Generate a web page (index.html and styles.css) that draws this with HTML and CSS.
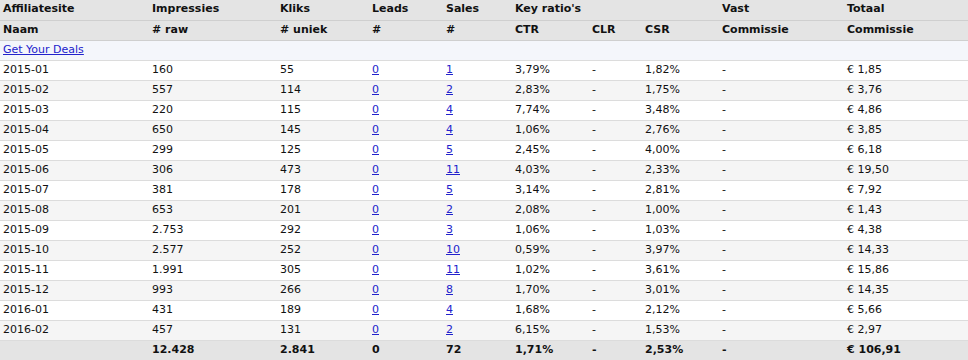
FILE: index.html
```html
<!DOCTYPE html>
<html>
<head>
<meta charset="utf-8">
<link rel="stylesheet" href="styles.css">
</head>
<body>
<table class="stats">
<colgroup>
<col class="c1"><col class="c2"><col class="c3"><col class="c4"><col class="c5"><col class="c6"><col class="c7"><col class="c8"><col class="c9"><col class="c10">
</colgroup>
<thead>
<tr class="head"><th>Affiliatesite</th><th>Impressies</th><th>Kliks</th><th>Leads</th><th>Sales</th><th colspan="3">Key ratio's</th><th>Vast</th><th>Totaal</th></tr>
<tr class="head"><th>Naam</th><th># raw</th><th># uniek</th><th>#</th><th>#</th><th>CTR</th><th>CLR</th><th>CSR</th><th>Commissie</th><th>Commissie</th></tr>
</thead>
<tbody>
<tr class="site"><td colspan="10"><a href="#">Get Your Deals</a></td></tr>
<tr><td>2015-01</td><td>160</td><td>55</td><td><a href="#">0</a></td><td><a href="#">1</a></td><td>3,79%</td><td>-</td><td>1,82%</td><td>-</td><td>€ 1,85</td></tr>
<tr class="alt"><td>2015-02</td><td>557</td><td>114</td><td><a href="#">0</a></td><td><a href="#">2</a></td><td>2,83%</td><td>-</td><td>1,75%</td><td>-</td><td>€ 3,76</td></tr>
<tr><td>2015-03</td><td>220</td><td>115</td><td><a href="#">0</a></td><td><a href="#">4</a></td><td>7,74%</td><td>-</td><td>3,48%</td><td>-</td><td>€ 4,86</td></tr>
<tr class="alt"><td>2015-04</td><td>650</td><td>145</td><td><a href="#">0</a></td><td><a href="#">4</a></td><td>1,06%</td><td>-</td><td>2,76%</td><td>-</td><td>€ 3,85</td></tr>
<tr><td>2015-05</td><td>299</td><td>125</td><td><a href="#">0</a></td><td><a href="#">5</a></td><td>2,45%</td><td>-</td><td>4,00%</td><td>-</td><td>€ 6,18</td></tr>
<tr class="alt"><td>2015-06</td><td>306</td><td>473</td><td><a href="#">0</a></td><td><a href="#">11</a></td><td>4,03%</td><td>-</td><td>2,33%</td><td>-</td><td>€ 19,50</td></tr>
<tr><td>2015-07</td><td>381</td><td>178</td><td><a href="#">0</a></td><td><a href="#">5</a></td><td>3,14%</td><td>-</td><td>2,81%</td><td>-</td><td>€ 7,92</td></tr>
<tr class="alt"><td>2015-08</td><td>653</td><td>201</td><td><a href="#">0</a></td><td><a href="#">2</a></td><td>2,08%</td><td>-</td><td>1,00%</td><td>-</td><td>€ 1,43</td></tr>
<tr><td>2015-09</td><td>2.753</td><td>292</td><td><a href="#">0</a></td><td><a href="#">3</a></td><td>1,06%</td><td>-</td><td>1,03%</td><td>-</td><td>€ 4,38</td></tr>
<tr class="alt"><td>2015-10</td><td>2.577</td><td>252</td><td><a href="#">0</a></td><td><a href="#">10</a></td><td>0,59%</td><td>-</td><td>3,97%</td><td>-</td><td>€ 14,33</td></tr>
<tr><td>2015-11</td><td>1.991</td><td>305</td><td><a href="#">0</a></td><td><a href="#">11</a></td><td>1,02%</td><td>-</td><td>3,61%</td><td>-</td><td>€ 15,86</td></tr>
<tr class="alt"><td>2015-12</td><td>993</td><td>266</td><td><a href="#">0</a></td><td><a href="#">8</a></td><td>1,70%</td><td>-</td><td>3,01%</td><td>-</td><td>€ 14,35</td></tr>
<tr><td>2016-01</td><td>431</td><td>189</td><td><a href="#">0</a></td><td><a href="#">4</a></td><td>1,68%</td><td>-</td><td>2,12%</td><td>-</td><td>€ 5,66</td></tr>
<tr class="alt"><td>2016-02</td><td>457</td><td>131</td><td><a href="#">0</a></td><td><a href="#">2</a></td><td>6,15%</td><td>-</td><td>1,53%</td><td>-</td><td>€ 2,97</td></tr>
</tbody>
<tfoot>
<tr class="total"><td></td><td>12.428</td><td>2.841</td><td>0</td><td>72</td><td>1,71%</td><td>-</td><td>2,53%</td><td>-</td><td>€ 106,91</td></tr>
</tfoot>
</table>
</body>
</html>
```
FILE: styles.css
```css
html, body {
  margin: 0;
  padding: 0;
  background: #ffffff;
}
body {
  font-family: "DejaVu Sans", sans-serif;
  font-size: 11px;
  color: #111;
}
.stats {
  width: 968px;
  border-collapse: collapse;
  table-layout: fixed;
}
.c1 { width: 149px; }
.c2 { width: 128px; }
.c3 { width: 92px; }
.c4 { width: 74px; }
.c5 { width: 69px; }
.c6 { width: 77px; }
.c7 { width: 53px; }
.c8 { width: 77px; }
.c9 { width: 125px; }
.c10 { width: 124px; }
.stats th,
.stats td {
  height: 20px;
  padding: 2px 3px 0;
  line-height: 13px;
  text-align: left;
  vertical-align: top;
  white-space: nowrap;
  border-bottom: 1px solid #dcdcdc;
  box-sizing: border-box;
}
.stats th {
  font-weight: bold;
  background: #e4e4e4;
  border-bottom: 1px solid #cfcfcf;
}
.stats a {
  color: #2222cc;
  text-decoration: underline;
}
.site td {
  background: #f4f6fb;
}
.alt td {
  background: #f5f5f5;
}
.total td {
  background: #e4e4e4;
  font-weight: bold;
  border-bottom: none;
}
```
